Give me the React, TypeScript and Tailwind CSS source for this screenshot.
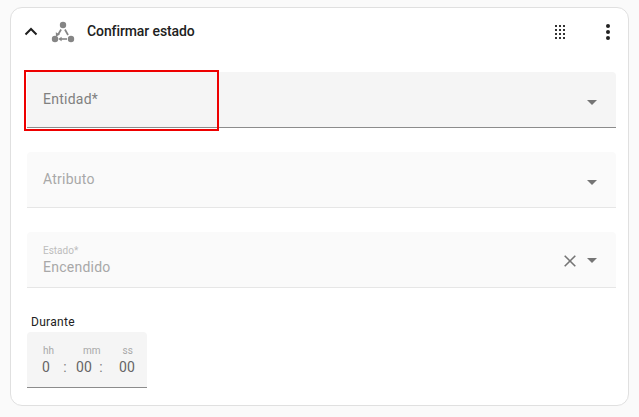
import React from "react";

function Caret() {
  return (
    <svg width="10" height="5" viewBox="0 0 10 5" className="block">
      <path d="M0 0h10L5 5z" fill="#757575" />
    </svg>
  );
}

function SelectField({
  label,
  value,
  active,
  clearable,
}: {
  label?: string;
  value: string;
  active?: boolean;
  clearable?: boolean;
}) {
  return (
    <div
      className={`flex h-14 items-center rounded-t pl-4 pr-[19px] border-b ${
        active ? "bg-[#f5f5f5] border-[#8c8c8c]" : "bg-[#fafafa] border-[#e6e6e6]"
      }`}
    >
      <div className="flex-1 mb-[2px]">
        {label && <div className="text-[10px] leading-[12px] text-[#bdbdbd] mt-1">{label}</div>}
        <div className={`text-sm leading-[20px] tracking-[0.25px] ${active ? "text-[#808080]" : "text-[#a8a8a8]"}`}>
          {value}
        </div>
      </div>
      {clearable && (
        <svg width="12" height="12" viewBox="0 0 12 12" className="mr-[11px] ml-[-1px] mt-[3px]">
          <path d="M.7.7l10.600 10.600M11.300.7L.7 11.300" stroke="#757575" strokeWidth="1.600" fill="none" />
        </svg>
      )}
      <div className={clearable ? "mt-[2px]" : "mt-[5px]"}>
        <Caret />
      </div>
    </div>
  );
}

export default function App() {
  return (
    <div className="h-[417px] w-[639px] overflow-hidden bg-[#fafafa] px-[10px] pt-[7px] font-['Roboto',sans-serif]">
      <div className="relative h-[399px] rounded-xl border border-[#e0e0e0] bg-white pl-4 pr-3">
        <div className="flex h-12 items-center">
          <svg width="14" height="9" viewBox="0 0 14 9" className="ml-[-3px] mb-[2px]">
            <path d="M1.500 7.500L7 2l5.500 5.500" stroke="#1f1f1f" strokeWidth="2" fill="none" />
          </svg>
          <svg width="24" height="24" viewBox="0 0 24 24" className="ml-[13px]" fill="#858585">
            <circle cx="12" cy="5" r="3.200" />
            <circle cx="4" cy="19" r="3.200" />
            <circle cx="20" cy="19" r="3.200" />
            <path d="M6.300 14.300l3-5.200 1.500.9-3 5.200z" />
            <path d="M4.800 12.300l4 2.200-3.800 2.300z" />
            <path d="M13.200 10l1.500-.9 3.100 5.400-1.500.9z" />
            <path d="M9 18.200h7v1.600H9z" />
            <path d="M7.200 19l3.400-2.300v4.600z" />
          </svg>
          <span className="ml-[12px] mb-[2px] text-sm font-medium leading-5 tracking-[-0.1px] text-[#212121]">Confirmar estado</span>
          <div className="ml-auto flex items-center">
            <svg width="12" height="14" viewBox="0 0 12 14" fill="#333333" className="mr-[38px]">
              {[0, 4, 8, 12].map((y) =>
                [0, 4, 8].map((x) => <rect key={`${x}-${y}`} x={x} y={y} width="2" height="2" />)
              )}
            </svg>
            <svg width="6" height="16" viewBox="0 0 6 16" fill="#222222" className="mr-[5px]">
              <circle cx="3" cy="2" r="2" />
              <circle cx="3" cy="8" r="2" />
              <circle cx="3" cy="14" r="2" />
            </svg>
          </div>
        </div>

        <div className="mt-4 flex flex-col gap-6">
          <SelectField value="Entidad*" active />
          <SelectField value="Atributo" />
          <SelectField label="Estado*" value="Encendido" clearable />
        </div>

        <div className="mt-[26px] pl-1 text-xs leading-[16px] tracking-[0.3px] text-[#212121]">Durante</div>
        <div className="mt-[2px] flex h-14 w-[120px] flex-col rounded-t border-b border-[#8c8c8c] bg-[#f5f5f5] pt-[13px] text-[#666666]">
          <div className="flex text-[10px] leading-3 text-[#a8a8a8]">
            <span className="ml-4">hh</span>
            <span className="ml-[29px]">mm</span>
            <span className="ml-[22px]">ss</span>
          </div>
          <div className="flex text-sm leading-[21px] tracking-[0.3px]">
            <span className="ml-[15px]">0</span>
            <span className="ml-[13px] text-[#808080]">:</span>
            <span className="ml-[9px]">00</span>
            <span className="ml-[7px] text-[#808080]">:</span>
            <span className="ml-[16px]">00</span>
          </div>
        </div>

        <div className="absolute left-[13px] top-[62px] h-[61px] w-[195px] border-2 border-[#ee0000]" />
      </div>
    </div>
  );
}
